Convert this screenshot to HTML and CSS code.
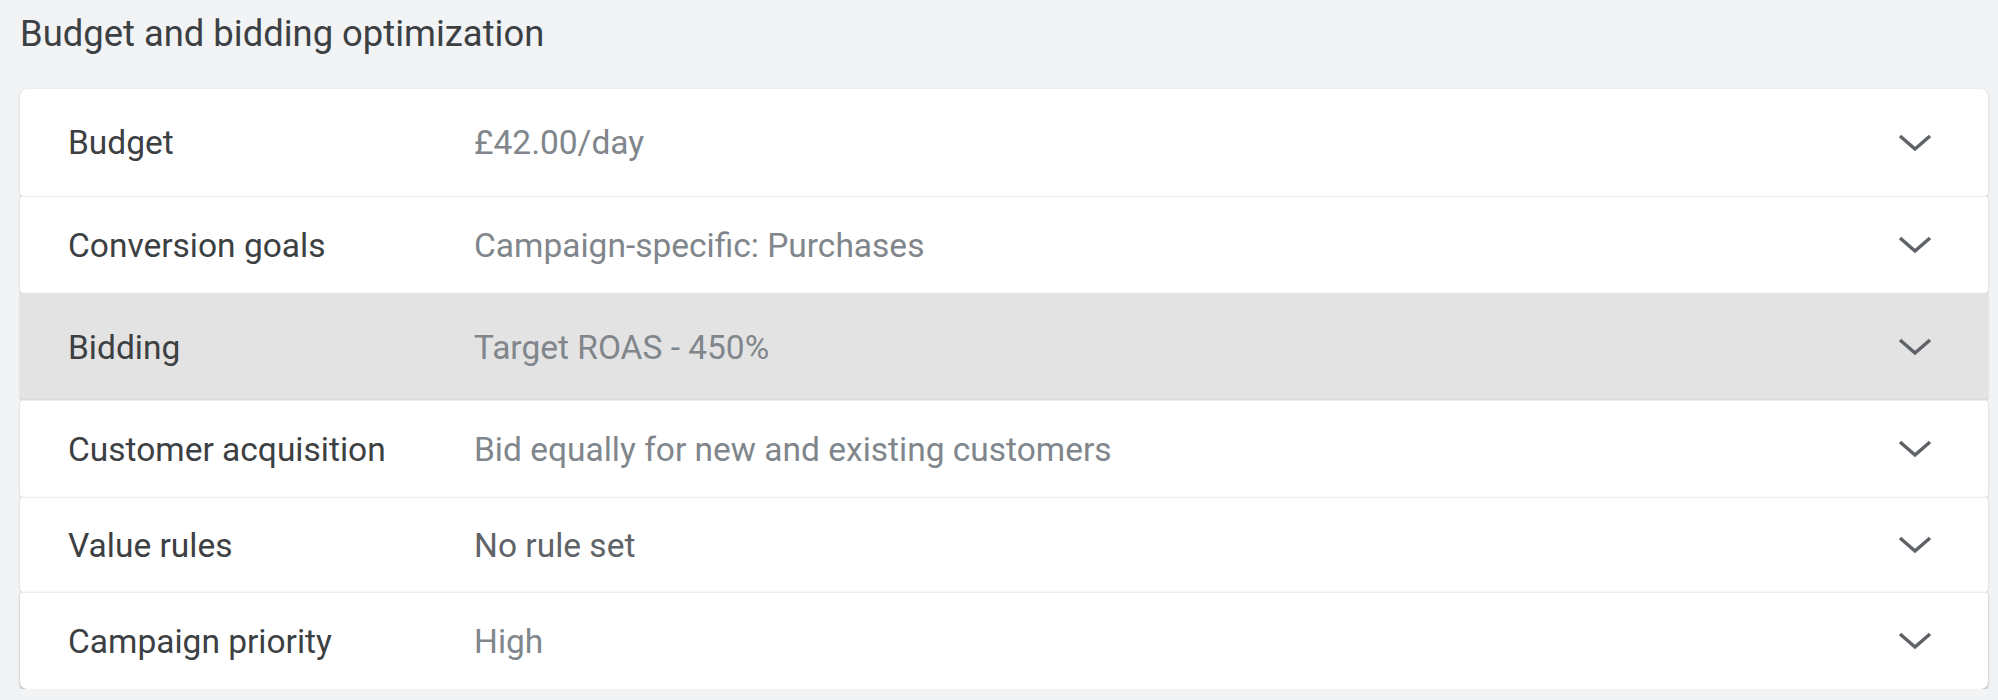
FILE: index.html
```html
<!DOCTYPE html>
<html lang="en">
<head>
  <meta charset="UTF-8" />
  <title>Budget and bidding optimization</title>
  <link rel="stylesheet" href="styles.css">
</head>
<body>

<section class="settings">
  <h2 class="settings-title">Budget and bidding optimization</h2>

  <div class="panels">
    <div class="panel tall">
      <span class="label">Budget</span>
      <span class="value">£42.00/day</span>
      <svg class="chevron" viewBox="0 0 34 18"><polyline points="2,2 17,15 32,2" /></svg>
    </div>
    <div class="panel">
      <span class="label">Conversion goals</span>
      <span class="value">Campaign-specific: Purchases</span>
      <svg class="chevron" viewBox="0 0 34 18"><polyline points="2,2 17,15 32,2" /></svg>
    </div>
    <div class="panel tall hover">
      <span class="label">Bidding</span>
      <span class="value">Target ROAS - 450%</span>
      <svg class="chevron" viewBox="0 0 34 18"><polyline points="2,2 17,15 32,2" /></svg>
    </div>
    <div class="panel">
      <span class="label">Customer acquisition</span>
      <span class="value">Bid equally for new and existing customers</span>
      <svg class="chevron" viewBox="0 0 34 18"><polyline points="2,2 17,15 32,2" /></svg>
    </div>
    <div class="panel short">
      <span class="label">Value rules</span>
      <span class="value dark">No rule set</span>
      <svg class="chevron" viewBox="0 0 34 18"><polyline points="2,2 17,15 32,2" /></svg>
    </div>
    <div class="panel">
      <span class="label">Campaign priority</span>
      <span class="value">High</span>
      <svg class="chevron" viewBox="0 0 34 18"><polyline points="2,2 17,15 32,2" /></svg>
    </div>
  </div>
</section>

</body>
</html>
```

FILE: styles.css
```css
:root {
  --bg: #f1f3f4;
  --label: #3c4043;
  --value: #80868b;
  --icon: #5f6368;
}

* {
  box-sizing: border-box;
  margin: 0;
  padding: 0;
}

body {
  font-family: Roboto, "Liberation Sans", sans-serif;
  background-color: var(--bg);
  color: var(--label);
}

.settings {
  padding: 12px 10px 0 20px;
}

.settings-title {
  font-size: 36.4px;
  font-weight: 400;
  color: #3c4043;
  line-height: 44px;
  margin-bottom: 33px;
}

.panels {
  display: flex;
  flex-direction: column;
}

.panel {
  display: flex;
  align-items: center;
  height: 97px;
  padding: 0 56px 0 48px;
  background: #fff;
  border-radius: 3px;
  box-shadow: 0 1px 2px rgba(60, 64, 67, 0.22), 0 0 1px rgba(60, 64, 67, 0.18);
  border-top: 1px solid #eceef0;
}

.panel:first-child {
  border-top: none;
  border-radius: 7px 7px 3px 3px;
}

.panel:last-child {
  border-radius: 3px 3px 7px 7px;
  box-shadow: 0 2px 3px rgba(60, 64, 67, 0.3), 0 0 1px rgba(60, 64, 67, 0.18);
}

.panel.tall {
  height: 107px;
}

.panel.short {
  height: 95px;
}

.panel.hover {
  background: #e3e3e3;
  border-top-color: #e3e3e3;
}

.label {
  width: 406px;
  font-size: 33.5px;
  color: var(--label);
}

.value {
  flex: 1;
  font-size: 33.5px;
  color: var(--value);
}

.value.dark {
  color: #5f6368;
}

.chevron {
  width: 34px;
  height: 18px;
  fill: none;
  stroke: var(--icon);
  stroke-width: 3.5;
}
```
